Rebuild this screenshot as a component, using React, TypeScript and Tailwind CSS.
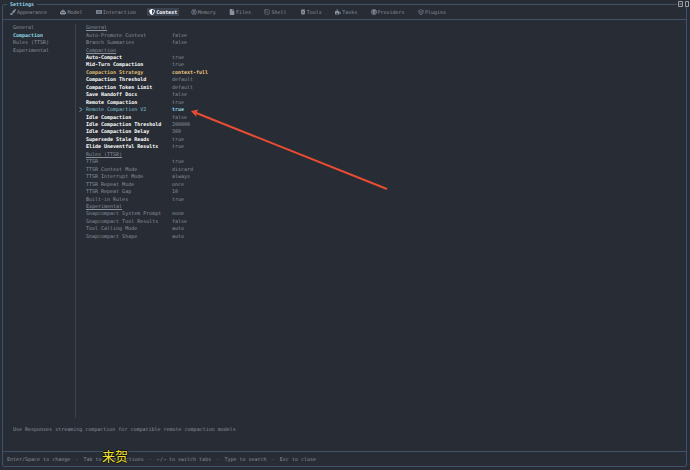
import React from "react";
import { FaPaintBrush, FaKeyboard, FaShieldAlt, FaFile, FaPuzzlePiece, FaGlobe } from "react-icons/fa";
import { LuSquareTerminal, LuBox, LuBrain } from "react-icons/lu";
import type { IconType } from "react-icons";

type IconProps = { className?: string };
type Tab = { name: string; Icon: IconType | React.FC<IconProps> };

function ModelIcon({ className }: IconProps) {
  return (
    <svg viewBox="0 0 12 12" className={className} fill="currentColor">
      <path fillRule="evenodd" d="M5 1h2v2h1.500a2 2 0 0 1 2 2v1H12v4h-1.500v1h-9v-1H0V6h1.500V5a2 2 0 0 1 2-2H5zM3 6v2h2V6zm4 0v2h2V6z" />
    </svg>
  );
}

function ToolsIcon({ className }: IconProps) {
  return (
    <svg viewBox="0 0 12 12" className={className} fill="currentColor">
      <path fillRule="evenodd" d="M3 0h2v2h2V0h2v3h1v5a3 3 0 0 1-3 3H5a3 3 0 0 1-3-3V3h1zM5 5v3h2V5z" />
    </svg>
  );
}

const tabs: Tab[] = [
  { name: "Appearance", Icon: FaPaintBrush },
  { name: "Model", Icon: ModelIcon },
  { name: "Interaction", Icon: FaKeyboard },
  { name: "Context", Icon: FaShieldAlt },
  { name: "Memory", Icon: LuBrain },
  { name: "Files", Icon: FaFile },
  { name: "Shell", Icon: LuSquareTerminal },
  { name: "Tools", Icon: ToolsIcon },
  { name: "Tasks", Icon: FaPuzzlePiece },
  { name: "Providers", Icon: FaGlobe },
  { name: "Plugins", Icon: LuBox },
];

type Tone = "dim" | "bright" | "changed" | "selected";
type Row = { label: string; value?: string; tone?: Tone };

const rows: Row[] = [
  { label: "General" },
  { label: "Auto-Promote Context", value: "false" },
  { label: "Branch Summaries", value: "false" },
  { label: "Compaction" },
  { label: "Auto-Compact", value: "true", tone: "bright" },
  { label: "Mid-Turn Compaction", value: "true", tone: "bright" },
  { label: "Compaction Strategy", value: "context-full", tone: "changed" },
  { label: "Compaction Threshold", value: "default", tone: "bright" },
  { label: "Compaction Token Limit", value: "default", tone: "bright" },
  { label: "Save Handoff Docs", value: "false", tone: "bright" },
  { label: "Remote Compaction", value: "true", tone: "bright" },
  { label: "Remote Compaction V2", value: "true", tone: "selected" },
  { label: "Idle Compaction", value: "false", tone: "bright" },
  { label: "Idle Compaction Threshold", value: "200000", tone: "bright" },
  { label: "Idle Compaction Delay", value: "300", tone: "bright" },
  { label: "Supersede Stale Reads", value: "true", tone: "bright" },
  { label: "Elide Uneventful Results", value: "true", tone: "bright" },
  { label: "Rules (TTSR)" },
  { label: "TTSR", value: "true" },
  { label: "TTSR Context Mode", value: "discard" },
  { label: "TTSR Interrupt Mode", value: "always" },
  { label: "TTSR Repeat Mode", value: "once" },
  { label: "TTSR Repeat Gap", value: "10" },
  { label: "Built-in Rules", value: "true" },
  { label: "Experimental" },
  { label: "Snapcompact System Prompt", value: "none" },
  { label: "Snapcompact Tool Results", value: "false" },
  { label: "Tool Calling Mode", value: "auto" },
  { label: "Snapcompact Shape", value: "auto" },
];

const labelTone: Record<Tone, string> = {
  dim: "",
  bright: "font-bold text-white",
  changed: "font-bold text-[#dfba72]",
  selected: "text-[#7fc0d6]",
};

const valueTone: Record<Tone, string> = {
  dim: "",
  bright: "",
  changed: "font-bold text-[#efca80]",
  selected: "font-bold text-[#8fd5e8]",
};

const hints = ["Enter/Space to change", "Tab to jump sections", "←/→ to switch tabs", "Type to search", "Esc to close"];

function SettingRow({ label, value, tone = "dim" }: Row) {
  if (value === undefined) {
    return (
      <li className="flex items-center pl-[7px]">
        <h2 className="underline decoration-1 underline-offset-1">{label}</h2>
      </li>
    );
  }
  return (
    <li className="flex">
      <button className="flex flex-1 items-center text-left">
        <span className="w-[7px] shrink-0 text-[#8fd5e8]">
          {tone === "selected" && (
            <svg viewBox="0 0 4 6" className="h-[5px] w-[4px]" fill="none" stroke="currentColor" strokeWidth="1">
              <path d="M0.5 0.5 3 3 0.5 5.5" />
            </svg>
          )}
        </span>
        <span className={`w-[86px] shrink-0 ${labelTone[tone]}`}>{label}</span>
        <span className={valueTone[tone]}>{value}</span>
      </button>
    </li>
  );
}

export default function App() {
  return (
    <div className="relative flex min-h-screen flex-col bg-[#282c34] pt-1 pr-[3px] pb-[3px] pl-[2px] font-['DejaVu_Sans_Mono','Liberation_Mono',monospace] text-[5px] leading-[7px] whitespace-nowrap text-[#8a919e]">
      <section className="flex flex-1 flex-col rounded-[2px] border border-[#3f5268]">
        <h1 className="absolute top-[1px] left-[7px] bg-[#282c34] px-[3px] font-bold text-[#8fd5e8]">Settings</h1>
        <div className="absolute top-[1px] right-[1px] flex gap-[2px] bg-[#282c34] pl-[1px] text-[#9a9ea6]">
          <svg viewBox="0 0 5 6" className="h-[6px] w-[5px]" fill="none" stroke="currentColor">
            <path d="M.5.5h4v5h-4zM1.500 3h2" />
          </svg>
          <svg viewBox="0 0 4 6" className="h-[6px] w-[4px]" fill="none" stroke="currentColor">
            <path d="M.5.5h3v5h-3z" />
          </svg>
        </div>

        <nav className="border-b border-[#3f5268] px-[5px] py-[3px]">
          <ul className="flex w-[440px] justify-between">
            {tabs.map(({ name, Icon }) => (
              <li key={name}>
                <button
                  className={`flex h-2 items-center gap-[1px] px-[2px] ${
                    name === "Context" ? "bg-[#3b4352] font-bold text-white" : ""
                  }`}
                >
                  <Icon className="h-[6px] w-[6px]" />
                  {name}
                </button>
              </li>
            ))}
          </ul>
        </nav>

        <div className="flex flex-1 pt-1">
          <ul className="grid h-[30px] w-[72px] shrink-0 auto-rows-fr pl-[10px]">
            {["General", "Compaction", "Rules (TTSR)", "Experimental"].map((name) => (
              <li key={name} className="flex items-center">
                <button className={name === "Compaction" ? "font-bold text-[#8fd5e8]" : ""}>{name}</button>
              </li>
            ))}
          </ul>
          <div className="flex-1 border-l border-[#3c434f] pl-[3px]">
            <ul className="grid h-[216px] auto-rows-fr">
              {rows.map((row) => (
                <SettingRow key={row.label} {...row} />
              ))}
            </ul>
          </div>
        </div>

        <p className="pt-2 pb-[18px] pl-[10px]">Use Responses streaming compaction for compatible remote compaction models</p>

        <footer className="border-t border-[#3f5268] px-1 pt-[3px] pb-[3px]">
          <ul className="flex h-2 w-[309px] items-center justify-between">
            {hints.map((hint, i) => (
              <React.Fragment key={hint}>
                {i > 0 && <li aria-hidden="true">·</li>}
                <li>{hint}</li>
              </React.Fragment>
            ))}
          </ul>
        </footer>
      </section>

      <svg viewBox="0 0 200 84" className="pointer-events-none absolute top-[108px] left-[190px] h-[84px] w-[200px]">
        <path d="M197 81 5 4.500" stroke="#e84c32" strokeWidth="2" />
        <path d="M1 3 8.500 1.500 6 5 6.500 9z" fill="#e84c32" />
      </svg>

      <div className="absolute bottom-[7px] left-[102px] font-['Noto_Sans_CJK_SC',sans-serif] text-[13px] leading-[14px] text-[#f0e130] [text-shadow:1px_0_#111,-1px_0_#111,0_1px_#111,0_-1px_#111]">
        来贺
      </div>
    </div>
  );
}
